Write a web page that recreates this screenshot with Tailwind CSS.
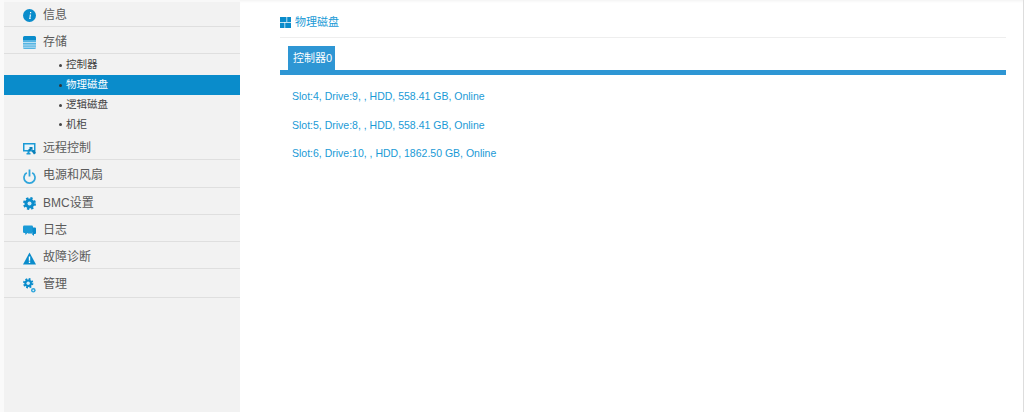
<!DOCTYPE html>
<html><head><meta charset="utf-8"><script src="https://cdn.jsdelivr.net/npm/@tailwindcss/browser@4"></script></head>
<body class="bg-white overflow-hidden">
<div class="w-[1024px] h-[412px] flex font-['Liberation_Sans','Noto_Sans_CJK_SC',sans-serif] overflow-hidden">
  <div class="w-[4px] bg-[#fafafa]"></div>
  <aside class="w-[236px] bg-[#f2f2f2] text-[12px] text-[#5a5a5a] shrink-0 border-t-2 border-[#f8f8f8]">
    <div class="h-[25px] pt-[1px] flex items-center pl-[19px] gap-[7px] border-b border-[#dfdfdf]">
      <svg class="w-[13px] h-[13px] mt-[2px]" viewBox="0 0 13 13"><circle cx="6.5" cy="6.5" r="6.5" fill="#0a8ccb"/><path d="M7 3h1.2v1.2H7zM6.8 5.5h1.2L7.3 9.5h.7v.6H6v-.6h.4z" fill="#fff"/></svg>
      <span>信息</span></div>
    <div class="h-[27px] pt-[3px] flex items-center pl-[19px] gap-[7px] border-b border-[#dfdfdf]">
      <svg class="w-[13px] h-[13px] mt-[1px]" viewBox="0 0 13 13"><path d="M1.5 0h10A1.5 1.5 0 0 1 13 1.500V4H0V1.500A1.500 1.500 0 0 1 1.500 0z" fill="#0a8ccb"/><path d="M0 4h13v7.500A1.500 1.500 0 0 1 11.500 13h-10A1.500 1.500 0 0 1 0 11.500z" fill="#55b4e2"/><path d="M0 6.500h13M0 9h13M0 11.200h13" stroke="#d5ecf8" stroke-width=".8"/></svg>
      <span>存储</span></div>
    <div class="text-[10.5px] text-[#444] pt-[1px]">
      <div class="h-[20px] flex items-center pl-[55px]"><span class="w-[3px] h-[3px] rounded-full bg-[#444] mr-[4px]"></span>控制器</div>
      <div class="h-[20px] flex items-center pl-[55px] bg-[#0a8ccb] text-white"><span class="w-[3px] h-[3px] rounded-full bg-[#333] mr-[4px]"></span>物理磁盘</div>
      <div class="h-[20px] flex items-center pl-[55px]"><span class="w-[3px] h-[3px] rounded-full bg-[#444] mr-[4px]"></span>逻辑磁盘</div>
      <div class="h-[19px] flex items-center pl-[55px]"><span class="w-[3px] h-[3px] rounded-full bg-[#444] mr-[4px]"></span>机柜</div>
    </div>
    <div class="h-[26px] pt-[3px] flex items-center pl-[19px] gap-[7px] border-b border-[#dfdfdf]">
      <svg class="w-[13px] h-[13px]" viewBox="0 0 13 13"><path d="M0 1h12.500v8.500H0z" fill="#1a9ad6"/><path d="M1.500 2.500h9.500v5.500H1.500z" fill="#e8f4fa"/><path d="M3.500 11h4v1.500h-4zM4.500 9h2v2h-2z" fill="#1a9ad6"/><path d="M6 5h3.500v3.500L8.500 7.500 6.500 9.500 5 8l2-2z" fill="#0a7fb8"/><path d="M8.500 9l3-1 1.500 3-2 1.500z" fill="#0a7fb8"/></svg>
      <span>远程控制</span></div>
    <div class="h-[28px] pt-[3px] flex items-center pl-[19px] gap-[7px] border-b border-[#dfdfdf]">
      <svg class="w-[13px] h-[15px] mt-[2px]" viewBox="0 0 13 15"><path d="M3.800 3.800a5.500 5.500 0 1 0 5.400 0" fill="none" stroke="#2fa5db" stroke-width="1.700"/><path d="M6.500 0.500v7" stroke="#2fa5db" stroke-width="1.800"/></svg>
      <span>电源和风扇</span></div>
    <div class="h-[27px] pt-[4px] flex items-center pl-[19px] gap-[7px] border-b border-[#dfdfdf]">
      <svg class="w-[13px] h-[13px] mt-[1px]" viewBox="0 0 13 13"><circle cx="6.500" cy="6.500" r="5" fill="#0a8ccb"/><circle cx="6.500" cy="6.500" r="5.300" fill="none" stroke="#0a8ccb" stroke-width="2.400" stroke-dasharray="2.200 2"/><circle cx="6.500" cy="6.500" r="2" fill="#cfe9f6"/></svg>
      <span>BMC设置</span></div>
    <div class="h-[27px] pt-[4px] flex items-center pl-[19px] gap-[7px] border-b border-[#dfdfdf]">
      <svg class="w-[13px] h-[13px] mt-[1px]" viewBox="0 0 13 13"><rect y="1.500" width="10" height="7.500" rx="1.200" fill="#1a9ad6"/><path d="M9.500 3.500H12a1 1 0 0 1 1 1V9a1 1 0 0 1-1 1h-1v2L8.800 10H5V9.500h4.500z" fill="#0a8ccb"/><path d="M2 8.500h3L2.500 11z" fill="#1a9ad6"/></svg>
      <span>日志</span></div>
    <div class="h-[27px] pt-[4px] flex items-center pl-[19px] gap-[7px] border-b border-[#dfdfdf]">
      <svg class="w-[13px] h-[13px] mt-[2px]" viewBox="0 0 13 13"><path d="M6.500 0.500L13 12.500H0z" fill="#0a8ccb"/><path d="M5.800 4.500h1.400v4.200H5.800zM5.800 9.500h1.400v1.500H5.800z" fill="#fff"/></svg>
      <span>故障诊断</span></div>
    <div class="h-[29px] pt-[2px] flex items-center pl-[19px] gap-[7px] border-b border-[#dfdfdf]">
      <svg class="w-[13px] h-[15px] mt-[2px]" viewBox="0 0 13 15"><circle cx="5.200" cy="5.200" r="3.800" fill="#0a8ccb"/><circle cx="5.200" cy="5.200" r="4.200" fill="none" stroke="#0a8ccb" stroke-width="2" stroke-dasharray="1.800 1.500"/><circle cx="5.200" cy="5.200" r="1.700" fill="#d5ecf8"/><circle cx="10.300" cy="12.300" r="2.300" fill="#2fa5db"/><circle cx="10.300" cy="12.300" r=".9" fill="#d5ecf8"/></svg>
      <span>管理</span></div>
  </aside>
  <main class="flex-1 shadow-[inset_0_3px_3px_-2px_rgba(0,0,0,0.06)] pl-[40px] pr-[17px] text-[#1a9ad6] border-r border-[#dddddd]">
    <div class="h-[38px] flex items-center gap-[4px] border-b border-[#eeeeee] text-[11px] pt-[8px]">
      <svg class="w-[11px] h-[11px]" viewBox="0 0 11 11"><path d="M0 0h6.500v5H0zM7.200 0H11v5H7.200zM0 5.700h4.500V11H0zM5.200 5.700H11V11H5.200z" fill="#0a8ccb"/></svg>
      <span>物理磁盘</span></div>
    <div class="flex h-[24px] pt-[8px] pl-[8px] border-b-[5px] border-[#2e96d4] box-content">
      <div class="h-[24px] pl-[5px] pr-[3px] bg-[#2e96d4] text-white text-[11px] flex items-center">控制器0</div>
    </div>
    <div class="pl-[12px] pt-[7px] text-[10.5px] leading-[28.5px]">
      <div>Slot:4, Drive:9, , HDD, 558.41 GB, Online</div>
      <div>Slot:5, Drive:8, , HDD, 558.41 GB, Online</div>
      <div>Slot:6, Drive:10, , HDD, 1862.50 GB, Online</div>
    </div>
  </main>
</div>
</body></html>
